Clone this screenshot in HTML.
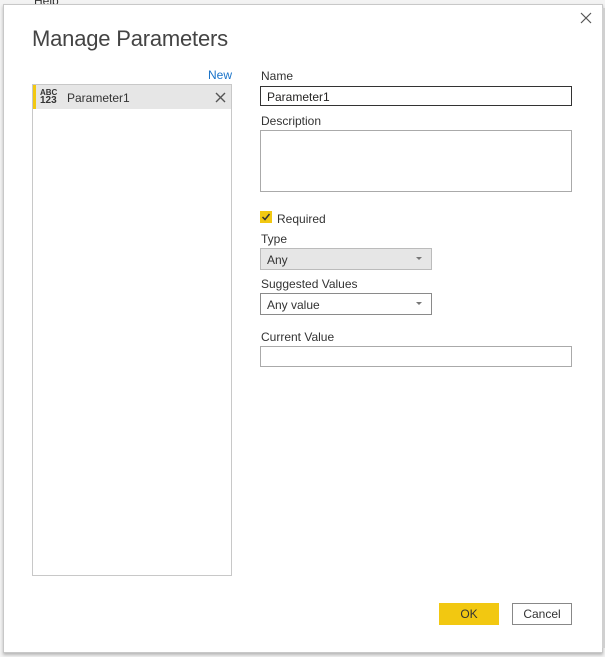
<!DOCTYPE html>
<html><head><style>
body{margin:0;width:605px;height:657px;background:#fff;position:relative;overflow:hidden;font-family:"Liberation Sans",sans-serif;color:#252423}
.a{position:absolute}
.lbl{font-size:12px;color:#333}
.inp{position:absolute;border:1px solid #8a8a8a;background:#fff;box-sizing:border-box}
</style></head><body>
<div class="a" style="left:0;top:0;width:605px;height:657px;background:#f3f3f3"></div>
<div class="a" style="left:34px;top:-6px;font-size:12px;color:#333">Help</div>
<div class="a" style="left:3px;top:4px;width:598px;height:647px;background:#fff;border:1px solid #c8c8c8;box-shadow:0 2px 3px rgba(0,0,0,.25)"></div>
<div class="a" style="left:602px;top:8px;width:3px;height:640px;background:#d0d0d0"></div>
<svg class="a" style="left:580px;top:12px" width="12" height="12"><path d="M1 1L11 11M11 1L1 11" stroke="#555" stroke-width="1.2"/></svg>
<div class="a" style="left:32px;top:26px;font-size:22px;color:#444;letter-spacing:-0.2px">Manage Parameters</div>
<div class="a" style="left:208px;top:68px;font-size:12px;color:#1a73c8">New</div>
<div class="a" style="left:32px;top:84px;width:198px;height:490px;border:1px solid #c8c8c8"></div>
<div class="a" style="left:33px;top:85px;width:198px;height:24px;background:#e6e6e6"></div>
<div class="a" style="left:33px;top:85px;width:3px;height:24px;background:#f2c811"></div>
<div class="a" style="left:40px;top:89px;font-size:8px;line-height:7px;color:#333;font-weight:bold">ABC<br><span style="font-size:10px;line-height:10px">123</span></div>
<div class="a" style="left:67px;top:91px;font-size:12px;color:#333">Parameter1</div>
<svg class="a" style="left:215px;top:92px" width="11" height="11"><path d="M1 1L10 10M10 1L1 10" stroke="#555" stroke-width="1.4"/></svg>
<div class="a lbl" style="left:261px;top:69px">Name</div>
<div class="inp" style="left:260px;top:86px;width:312px;height:20px;border-color:#333"><span style="position:absolute;left:6px;top:3px;font-size:12px">Parameter1</span></div>
<div class="a lbl" style="left:261px;top:114px">Description</div>
<div class="inp" style="left:260px;top:130px;width:312px;height:62px;border-color:#aaa"></div>
<div class="a" style="left:260px;top:211px;width:12px;height:12px;background:#f2c811"></div>
<svg class="a" style="left:260px;top:211px" width="12" height="12"><path d="M2.5 6L5 8.5L9.5 3" stroke="#333" stroke-width="1.5" fill="none"/></svg>
<div class="a lbl" style="left:277px;top:212px">Required</div>
<div class="a lbl" style="left:261px;top:232px">Type</div>
<div class="inp" style="left:260px;top:248px;width:172px;height:22px;background:#e6e6e6;border-color:#bbb"><span style="position:absolute;left:6px;top:4px;font-size:12px;color:#333">Any</span><span style="position:absolute;right:9px;top:8px;width:0;height:0;border-left:3px solid transparent;border-right:3px solid transparent;border-top:3px solid #777"></span></div>
<div class="a lbl" style="left:261px;top:277px">Suggested Values</div>
<div class="inp" style="left:260px;top:293px;width:172px;height:22px"><span style="position:absolute;left:6px;top:4px;font-size:12px;color:#333">Any value</span><span style="position:absolute;right:9px;top:8px;width:0;height:0;border-left:3px solid transparent;border-right:3px solid transparent;border-top:3px solid #777"></span></div>
<div class="a lbl" style="left:261px;top:330px">Current Value</div>
<div class="inp" style="left:260px;top:346px;width:312px;height:21px;border-color:#aaa"></div>
<div class="a" style="left:439px;top:603px;width:60px;height:22px;background:#f2c811;font-size:12px;text-align:center;line-height:22px;color:#333">OK</div>
<div class="inp" style="left:512px;top:603px;width:60px;height:22px;border-color:#888;font-size:12px;text-align:center;line-height:20px;color:#333">Cancel</div>
</body></html>
